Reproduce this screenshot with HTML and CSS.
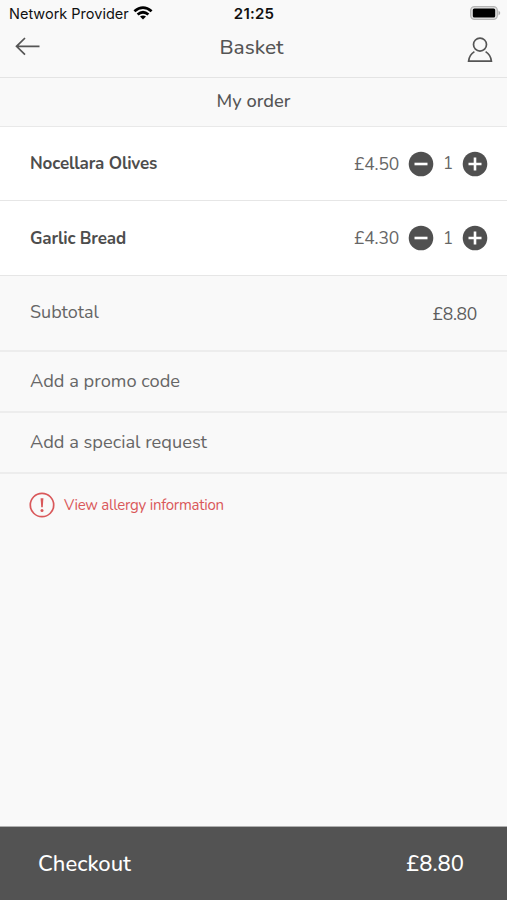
FILE: index.html
```html
<!DOCTYPE html>
<html lang="en">
<head>
<meta charset="utf-8">
<title>Basket</title>
<link rel="stylesheet" href="styles.css">
</head>
<body>
<div class="screen">
  <div class="status">
    <div class="carrier"><span>Network Provider</span>
      <svg class="wifi" width="20" height="14" viewBox="0 0 20 14"><g fill="none" stroke="#000" stroke-width="2.7"><path d="M1.4 5.3Q10 -2.2 18.6 5.3"/><path d="M4.6 8.6Q10 3.9 15.4 8.6"/></g><path d="M10 13.6L7 10.6Q10 8.5 13 10.6Z"/></svg>
    </div>
    <b class="clock">21:25</b>
    <svg class="battery" width="31" height="14" viewBox="0 0 31 14"><rect x=".7" y=".7" width="26.6" height="12.6" rx="3.8" fill="#e4e4e4" stroke="#b5b5b5" stroke-width="1.3"/><rect x="2.8" y="2.5" width="22.4" height="9" rx="1.6"/><path d="M28.5 4.4Q32 7 28.5 9.6Z" fill="#aaa"/></svg>
  </div>
  <header class="bar">
    <svg class="back" width="26" height="20" viewBox="0 0 26 20"><path d="M24.5 9.3H1.5M10 1L1.5 9.3L10 17.6" fill="none" stroke="#555" stroke-width="1.7"/></svg>
    <h1 class="title">Basket</h1>
    <svg class="user" width="26" height="26" viewBox="0 0 26 26"><g fill="none" stroke="#555" stroke-width="1.7"><circle cx="13" cy="7.6" r="6.5"/><path d="M7.4 14.6Q2.2 17.8 1.6 24.2H24.4Q23.8 17.8 18.6 14.6"/></g></svg>
  </header>
  <h2 class="section"><span>My order</span></h2>
  <div class="item">
    <span class="name">Nocellara Olives</span><span class="price">£4.50</span>
    <svg class="round" width="26" height="26" viewBox="0 0 26 26"><circle cx="13" cy="13" r="12.3"/><path d="M6.5 13H19.5"/></svg>
    <span class="qty">1</span>
    <svg class="round" width="26" height="26" viewBox="0 0 26 26"><circle cx="13" cy="13" r="12.3"/><path d="M6.5 13H19.5M13 6.5V19.5"/></svg>
  </div>
  <div class="item">
    <span class="name">Garlic Bread</span><span class="price">£4.30</span>
    <svg class="round" width="26" height="26" viewBox="0 0 26 26"><circle cx="13" cy="13" r="12.3"/><path d="M6.5 13H19.5"/></svg>
    <span class="qty">1</span>
    <svg class="round" width="26" height="26" viewBox="0 0 26 26"><circle cx="13" cy="13" r="12.3"/><path d="M6.5 13H19.5M13 6.5V19.5"/></svg>
  </div>
  <div class="subtotal"><span class="label">Subtotal</span><span class="sum">£8.80</span></div>
  <div class="link"><span>Add a promo code</span></div>
  <div class="link"><span>Add a special request</span></div>
  <div class="allergy">
    <svg width="26" height="26" viewBox="0 0 26 26"><circle cx="13" cy="13" r="11.7" fill="none" stroke="#d9585a" stroke-width="1.7"/><path d="M11.6 6.2H14.4L13.8 15.2H12.2Z" fill="#d9585a"/><circle cx="13" cy="18.6" r="1.5" fill="#d9585a"/></svg>
    <span>View allergy information</span>
  </div>
  <footer class="checkout"><span class="action">Checkout</span><span class="total">£8.80</span></footer>
</div>
</body>
</html>
```
FILE: styles.css
```css
* { box-sizing: border-box; }
body { margin: 0; background: #f9f9f9; color: #666; font-family: Nunito, Lato, sans-serif; font-size: 18px; white-space: nowrap; }
svg { display: block; flex: none; }
.screen { height: 900px; display: flex; flex-direction: column; overflow: hidden; }
.status { height: 27px; display: grid; grid-template-columns: 1fr auto 1fr; align-items: center; padding: 0 6px 0 7px; color: #111; font-family: Inter, sans-serif; font-size: 14.5px; }
.carrier { display: flex; gap: 4px; align-items: center; padding-left: 2px; }
.wifi { margin-top: -2px; }
.battery { justify-self: end; margin-top: -1px; }
.clock { font-weight: 600; font-size: 15px; letter-spacing: .2px; }
.bar { height: 51px; border-bottom: 1px solid #e4e4e4; display: grid; grid-template-columns: 1fr auto 1fr; padding: 0 14px 0 15px; }
.back { margin-top: 10px; }
.user { margin-top: 10px; justify-self: end; }
.title { margin: 0 5px 0 0; font-weight: 500; font-size: 20.8px; line-height: 41px; color: #555; }
.section { margin: 0; height: 49px; border-bottom: 1px solid #e9e9e9; text-align: center; font-size: 18.3px; font-weight: 500; line-height: 47px; color: #555; }
.item { height: 75px; border-bottom: 1px solid #e6e6e6; background: #fff; display: flex; align-items: center; padding: 0 19px 0 30px; }
.section + .item { height: 74px; }
.name { flex: 1; font-size: 17px; font-weight: 700; color: #4d4d4d; letter-spacing: -.15px; }
.price { font-size: 17.5px; letter-spacing: -.2px; margin-right: 9px; }
.qty { width: 28px; text-align: center; font-size: 17px; }
.round { fill: #505050; }
.round path { stroke: #fff; stroke-width: 2.6; }
.subtotal { height: 76px; border-bottom: 2px solid #ededed; display: flex; justify-content: space-between; align-items: center; padding: 0 30px; }
.label { padding-bottom: 2px; }
.sum { font-size: 17.5px; letter-spacing: -.3px; color: #5c5c5c; padding-top: 2px; }
.link { height: 61px; border-bottom: 2px solid #ededed; line-height: 59px; padding-left: 30px; font-size: 18.25px; }
.allergy { height: 61px; display: flex; align-items: center; gap: 9px; padding-left: 29px; color: #d9585a; font-size: 15px; letter-spacing: -.25px; }
.checkout { margin-top: auto; height: 74px; border-top: 1px solid #b0b0b0; background: #535353; color: #fff; display: flex; justify-content: space-between; align-items: center; padding: 0 43px 0 38px; font-size: 22px; font-weight: 500; }
```
